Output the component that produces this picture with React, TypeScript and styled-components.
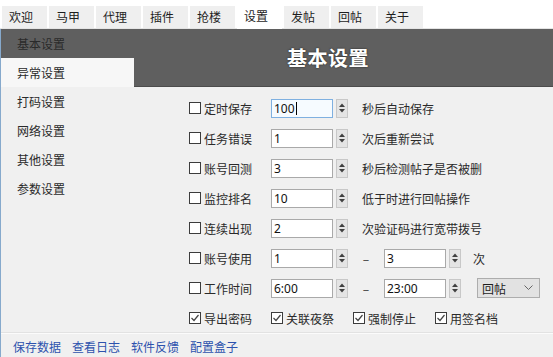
import React from "react";
import styled, { createGlobalStyle } from "styled-components";

const GlobalStyle = createGlobalStyle`
  html, body { margin: 0; padding: 0; width: 553px; height: 357px; overflow: hidden; background: #fff; }
  body { font-family: "Noto Sans CJK SC", "Noto Sans", sans-serif; font-size: 12px; color: #1e1e1e; }
  * { box-sizing: border-box; }
`;

const Window = styled.div`
  width: 553px;
  height: 357px;
  display: flex;
  flex-direction: column;
  background: #fff;
`;

const TabStrip = styled.div`
  height: 29px;
  flex: none;
  display: flex;
  align-items: flex-end;
  gap: 2px;
  padding-left: 2px;
  background: #fff;
  border-bottom: 1px solid #e4e4e4;
`;

const Tab = styled.div<{ $active?: boolean }>`
  width: 45px;
  height: ${(p) => (p.$active ? 27 : 22)}px;
  padding-left: 7px;
  display: flex;
  align-items: center;
  padding-top: ${(p) => (p.$active ? 0 : 0)}px;
  background: ${(p) => (p.$active ? "#ffffff" : "#efefef")};
  color: #1e1e1e;
  font-size: 12px;
  line-height: 1;
  margin-bottom: ${(p) => (p.$active ? -1 : 0)}px;
`;

const Frame = styled.div`
  flex: 1;
  display: flex;
  flex-direction: column;
  background: #f0f0f0;
  border-left: 1px solid #86a9cc;
`;

const Main = styled.div`
  flex: 1;
  display: flex;
`;

const Sidebar = styled.div`
  width: 133px;
  flex: none;
  display: flex;
  flex-direction: column;
`;

const SideItem = styled.div<{ $state?: "active" | "hover" }>`
  height: 29px;
  padding-left: 16px;
  display: flex;
  align-items: center;
  color: #2a2a2a;
  background: ${(p) =>
    p.$state === "active" ? "#5f5f5f" : p.$state === "hover" ? "#f7f7f7" : "transparent"};
`;

const Content = styled.div`
  flex: 1;
  display: flex;
  flex-direction: column;
`;

const Header = styled.div`
  height: 58px;
  flex: none;
  background: #5f5f5f;
  border-bottom: 1px solid #4c4c4c;
  display: flex;
  align-items: center;
  padding-left: 153px;
`;

const Title = styled.div`
  color: #fff;
  font-size: 20px;
  font-weight: 700;
  letter-spacing: 0.5px;
  text-shadow: 0 0 2px rgba(0, 0, 0, 0.7);
`;

const Form = styled.div`
  padding: 6px 0 0 55px;
  display: flex;
  flex-direction: column;
`;

const Row = styled.div`
  height: 30px;
  display: flex;
  align-items: center;
`;

const CheckCell = styled.label`
  width: 82px;
  flex: none;
  display: flex;
  align-items: center;
  gap: 3px;
  color: #2a2a2a;
`;

const Box = styled.span`
  width: 12px;
  height: 12px;
  border: 1px solid #3c3c3c;
  background: #fff;
  display: flex;
  align-items: center;
  justify-content: center;
`;

const SpinWrap = styled.div`
  display: flex;
  align-items: center;
  gap: 3px;
`;

const Field = styled.div<{ $focus?: boolean }>`
  width: 62px;
  height: 19px;
  border: 1px solid ${(p) => (p.$focus ? "#7fb0e0" : "#a9a9a9")};
  background: ${(p) => (p.$focus ? "#f6fbff" : "#ffffff")};
  padding-left: 2px;
  display: flex;
  align-items: center;
  font-size: 12px;
  color: #111;
  font-family: "Noto Sans", "Noto Sans CJK SC", sans-serif;
`;

const Caret = styled.span`
  width: 1px;
  height: 13px;
  background: #000;
  margin-left: 1px;
`;

const Spin = styled.div`
  width: 12px;
  height: 19px;
  border: 1px solid #c8c8c8;
  background: #e4e4e4;
  display: flex;
  flex-direction: column;
  align-items: center;
  justify-content: center;
  gap: 2px;
`;

const Hint = styled.span<{ $gap?: number }>`
  margin-left: ${(p) => p.$gap ?? 14}px;
  color: #2a2a2a;
`;

const Dash = styled.span`
  width: 36px;
  text-align: center;
  color: #2a2a2a;
`;

const Select = styled.div`
  margin-left: 16px;
  width: 63px;
  height: 20px;
  border: 1px solid #adadad;
  background: #e2e2e2;
  display: flex;
  align-items: center;
  justify-content: space-between;
  padding: 0 6px 0 4px;
  color: #1e1e1e;
`;

const Footer = styled.div`
  height: 25px;
  flex: none;
  display: flex;
  align-items: center;
  gap: 11px;
  padding-left: 12px;
  border-top: 1px solid #fbfbfb;
  box-shadow: 0 -1px 0 #e2e2e2;
`;

const Link = styled.a`
  color: #2d52ad;
  text-decoration: none;
  font-size: 12px;
  cursor: pointer;
`;

const Check = ({ checked }: { checked?: boolean }) => (
  <Box>
    {checked && (
      <svg width="10" height="10" viewBox="0 0 10 10">
        <polyline points="1.5,5 4,7.5 8.5,2" fill="none" stroke="#444" strokeWidth="1.2" />
      </svg>
    )}
  </Box>
);

const SpinBox = ({ value, focus }: { value: string; focus?: boolean }) => (
  <SpinWrap>
    <Field $focus={focus}>
      {value}
      {focus && <Caret />}
    </Field>
    <Spin>
      <svg width="6" height="4" viewBox="0 0 6 4">
        <polygon points="0,4 3,0.5 6,4" fill="#404040" />
      </svg>
      <svg width="6" height="4" viewBox="0 0 6 4">
        <polygon points="0,0 3,3.5 6,0" fill="#404040" />
      </svg>
    </Spin>
  </SpinWrap>
);

const tabs = ["欢迎", "马甲", "代理", "插件", "抢楼", "设置", "发帖", "回帖", "关于"];
const sideItems = ["基本设置", "异常设置", "打码设置", "网络设置", "其他设置", "参数设置"];

const simpleRows: { label: string; value: string; hint: string; focus?: boolean }[] = [
  { label: "定时保存", value: "100", hint: "秒后自动保存", focus: true },
  { label: "任务错误", value: "1", hint: "次后重新尝试" },
  { label: "账号回测", value: "3", hint: "秒后检测帖子是否被删" },
  { label: "监控排名", value: "10", hint: "低于时进行回帖操作" },
  { label: "连续出现", value: "2", hint: "次验证码进行宽带拨号" },
];

export default function App() {
  return (
    <>
      <GlobalStyle />
      <Window>
        <TabStrip>
          {tabs.map((t) => (
            <Tab key={t} $active={t === "设置"}>
              {t}
            </Tab>
          ))}
        </TabStrip>
        <Frame>
          <Main>
            <Sidebar>
              {sideItems.map((s, i) => (
                <SideItem key={s} $state={i === 0 ? "active" : i === 1 ? "hover" : undefined}>
                  {s}
                </SideItem>
              ))}
            </Sidebar>
            <Content>
              <Header>
                <Title>基本设置</Title>
              </Header>
              <Form>
                {simpleRows.map((r) => (
                  <Row key={r.label}>
                    <CheckCell>
                      <Check />
                      {r.label}
                    </CheckCell>
                    <SpinBox value={r.value} focus={r.focus} />
                    <Hint>{r.hint}</Hint>
                  </Row>
                ))}
                <Row>
                  <CheckCell>
                    <Check />
                    账号使用
                  </CheckCell>
                  <SpinBox value="1" />
                  <Dash>–</Dash>
                  <SpinBox value="3" />
                  <Hint $gap={12}>次</Hint>
                </Row>
                <Row>
                  <CheckCell>
                    <Check />
                    工作时间
                  </CheckCell>
                  <SpinBox value="6:00" />
                  <Dash>–</Dash>
                  <SpinBox value="23:00" />
                  <Select>
                    <span>回帖</span>
                    <svg width="9" height="6" viewBox="0 0 9 6">
                      <polyline points="0.5,0.5 4.5,4.5 8.5,0.5" fill="none" stroke="#666" strokeWidth="1" />
                    </svg>
                  </Select>
                </Row>
                <Row>
                  {["导出密码", "关联夜祭", "强制停止", "用签名档"].map((l) => (
                    <CheckCell key={l}>
                      <Check checked />
                      {l}
                    </CheckCell>
                  ))}
                </Row>
              </Form>
            </Content>
          </Main>
          <Footer>
            {["保存数据", "查看日志", "软件反馈", "配置盒子"].map((l) => (
              <Link key={l}>{l}</Link>
            ))}
          </Footer>
        </Frame>
      </Window>
    </>
  );
}
